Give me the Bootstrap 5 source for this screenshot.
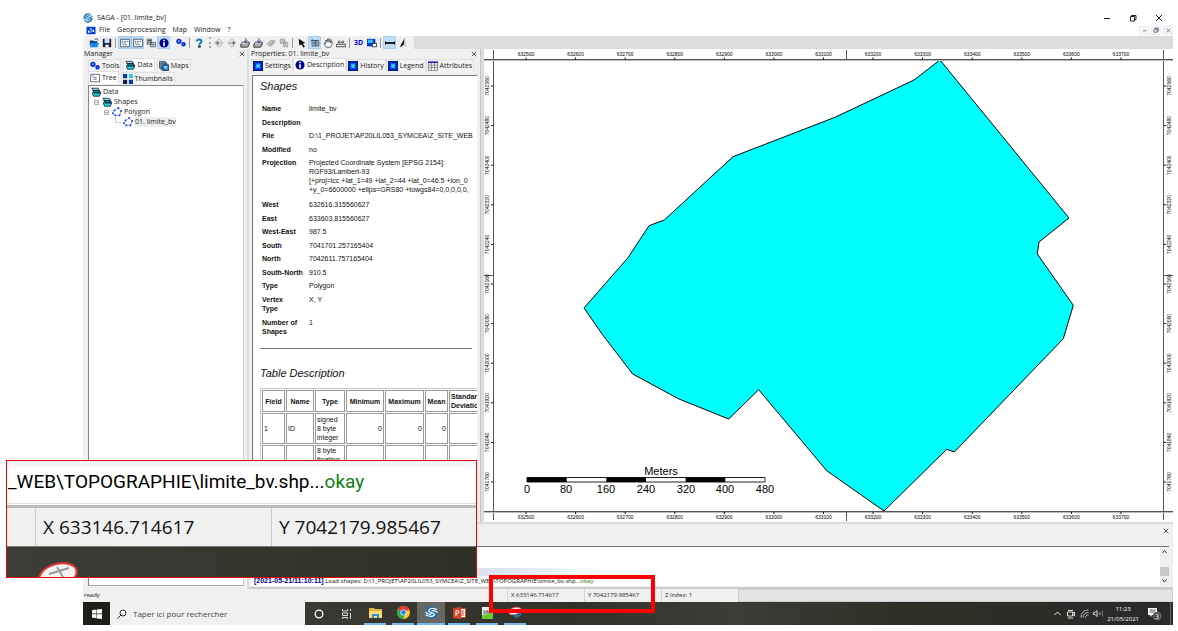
<!DOCTYPE html>
<html lang="fr">
<head>
<meta charset="utf-8">
<meta name="viewport" content="width=device-width, initial-scale=1">
<title>SAGA - [01. limite_bv]</title>
<link href="https://cdn.jsdelivr.net/npm/bootstrap@5.3.0/dist/css/bootstrap.min.css" rel="stylesheet">
<style>
:root{--ui:"Open Sans","Noto Sans",sans-serif;--face:#f0f0f0;--edge:#dcdcdc;--hot:#bfdcf5}
body{font:7px/10px var(--ui);color:#222;background:#fff}
button,input,a{font:inherit;color:inherit}
button{border:0;background:none;padding:0}
svg{display:block;flex:none}
.desk{padding:12px 5px 5px 83px}
.ico{width:10px;height:10px}
.titlebar{height:12px}
.titlebar .caption{gap:18px;padding-right:10px}
.menubar{height:12px;padding-left:3px;gap:7px}
.menubar a{text-decoration:none;color:#222}
.menubar .first{margin-left:-4px}
.mdi{gap:2px}
.mdi button{width:10px;height:9px;background:#f7f7f7;border:1px solid #eee;color:#345;display:grid;place-items:center}
.toolstrip{background:var(--edge);height:13px}
.tools{background:var(--face);padding:0 5px 0 4px}
.tools button{width:13px;height:13px;display:grid;place-items:center}
.tools button.on{background:var(--hot);box-shadow:inset 0 0 0 1px #a9d0f2}
.tools .bar{width:1px;height:10px;background:#999;margin:0 2px}
.tools .grip{width:3px;height:11px;border-left:2px dotted #aaa}
.tools .three{color:#0000e0}
.work{display:grid;grid-template-columns:166px 232px minmax(0,1fr);grid-template-rows:auto 67px;background:var(--edge)}
.pane{background:var(--face)}
.pane-manager{grid-row:1/3;border-right:2px solid var(--edge);padding:0 2px 3px 1px}
.pane-props{min-width:0;padding:0 3px 0 2px;border-right:1px solid #c4c4c4}
.pane-head{height:9px;line-height:9px}
.tabs{gap:2px;align-items:flex-end;height:13px}
.tabs button{display:flex;align-items:center;gap:2px;height:12px;padding:0 1px;border:1px solid #e0e0e0;border-bottom:0;background:#f3f3f3;white-space:nowrap}
.tabs button.active{background:#fff;height:13px}
.tabs.tight{gap:0}
.tree{background:#fff;border:1px solid #888;border-color:#888 #ccc #aaa #888;margin:1px 1px 0 4px;flex:1;padding-top:1px}
.tree ul{list-style:none;margin:0;padding:0}
.tree li>span{display:flex;align-items:center;gap:2px;height:10px}
.page{background:#fff;border:solid #777;border-width:1px 0 0 1px;margin:4px 0 0 1px;padding:4px 0 0 7px;overflow:hidden;font-family:"Liberation Sans",Arial,sans-serif;line-height:9px;flex:1;color:#111}
.page h2{font-size:11px;line-height:13px;font-style:italic;font-weight:400;margin:0}
.page .second{margin-top:18px}
.facts{margin:9px 0 0;height:237px;width:400px}
.facts th,.facts td{padding:2px;vertical-align:top}
.facts th{width:47px}
.page hr{margin:9px 5px 0 0;border-color:#777;opacity:1}
.fields{border:1px solid #ccc;border-collapse:separate;border-spacing:1px;width:250px;table-layout:fixed;margin-top:8px}
.fields th,.fields td{border:1px solid #999;padding:0 1px;height:22px;vertical-align:middle}
.fields th{text-align:center}
.fields td{height:31px}
.fields .open td{vertical-align:top}
.num{text-align:right}
.pane-map{background:#fff;min-width:0}
.pane-map svg{width:100%;height:auto}
.tick{font:5px "Liberation Sans",Arial,sans-serif;fill:#000;text-anchor:middle}
.scale{font:11px "Liberation Sans",Arial,sans-serif;fill:#000;text-anchor:middle}
.pane-log{grid-column:2/4;border-top:2px solid var(--edge);border-bottom:2px solid #ccc;min-width:0}
.log{border-top:1px solid #777;background:#fff;height:40px;margin:0 4px 0 2px;overflow:hidden;font-size:6px}
.log .lines{padding-left:3px;white-space:nowrap;color:#111}
.log .previous{height:8px;width:350px;background:linear-gradient(90deg,#dbe3ef 70%,#fff)}
.log b{color:#000080;font:bold 7px "Liberation Sans",Arial,sans-serif}
.ok{color:#118011}
.scroller{width:9px;background:var(--face)}
.scroller .thumb{height:9px;background:#c8c8c8}
.statusbar{height:13px;background:var(--face);font-size:6px;line-height:13px}
.statusbar .message{width:424px;padding-left:1px}
.statusbar .cell{width:77px;border-left:1px solid #d4d4d4;padding-left:3px}
.statusbar .rest{background:#e5e5e5;border:1px solid #ccc}
.taskbar{height:23px;background:linear-gradient(90deg,#3e3e3b,#333229 45%,#3c3c39 60%,#302f25 75%,#282a2b);color:#fff}
.start{width:27px;background:#1f1f18;display:grid;place-items:center}
.search{width:195px;background:#f1f1f1;color:#333;padding-left:7px;gap:6px}
.search input{border:0;background:none;padding:0;width:150px;outline:0;color:#444;font-size:8px}
.search input::placeholder{color:#444;opacity:1}
.apps button{width:28px;height:23px;display:grid;place-items:center}
.apps button.run{border-bottom:2px solid #76b9ed;width:22px;margin:0 3px}
.apps button.now{background:#666865;width:28px;margin:0}
.tray{gap:4px;padding-right:2px;font-size:6px;line-height:10px}
.tray .peek{width:1px;background:#666}
.callout{left:6px;top:460px;width:471px;height:118px;border:1px solid #e00;background:#fff;overflow:hidden;color:#000}
.callout .c-line{height:43px;padding:5px 0 0 1px;font:19px/32px Roboto,"Liberation Sans",sans-serif;background:linear-gradient(#e8eef8,#fff 8px);white-space:nowrap;border-bottom:1px solid #ddd}
.callout .c-status{margin-top:1px;height:41px;border-top:3px solid #bbb;background:var(--face);font-size:19px;line-height:38px;color:#111}
.callout .c-x{margin-left:28px;width:236px;border-left:1px solid #ccc;padding-left:7px}
.callout .c-y{border-left:1px solid #ccc;padding-left:7px}
.callout .c-task{height:33px;background:linear-gradient(90deg,#3d3d38,#302f26);border-top:1px solid #777}
.focusbox{left:489px;top:575px;width:166px;height:38px;border:4px solid #f00}
</style>
</head>
<body>
<svg width="0" height="0" class="position-absolute" aria-hidden="true">
  <symbol id="saga" viewBox="0 0 12 12"><circle cx="6" cy="6" r="5.600" fill="#1b6fae"/><path d="M11 3.500C8 1.500 3.500 2 3.500 4.300S9 5.800 8.700 8 4 9.800.5 8M11.500 6C9 3.800 6 3.800 6.500 5M.5 5.500c2 2.500 5 2.500 5.500 1.500" fill="none" stroke="#fff" stroke-width="1.100"/></symbol>
  <symbol id="doc" viewBox="0 0 12 12"><path fill="#0638d8" d="M0 1h12v10H0z"/><path fill="#fff" d="M2 6h2v3H2zM5 3h2v2H5zM8 5h2v3H8z"/><path fill="#3cf" d="M5 6h2v3H5z"/></symbol>
  <symbol id="open" viewBox="0 0 12 12"><path fill="#0a3f9a" d="M1 3h4l1 1h4v2H3L1 10z"/><path fill="#1687ee" d="M3 6h9l-2 5H1z"/><path d="M7 2c2-2 3-1 4 1" fill="none" stroke="#124"/></symbol>
  <symbol id="save" viewBox="0 0 12 12"><path fill="#111b33" d="M1 1h10v10H1z"/><path fill="#cfe0ff" d="M3 1h6v5H3z"/><path fill="#fff" d="M4 8h4v3H4z"/></symbol>
  <symbol id="win" viewBox="0 0 12 12"><path fill="#fff" stroke="#334a5a" d="M.5 1.500h11v9H.5z"/><path stroke="#334a5a" stroke-dasharray="2 1" d="M2 4h8M2 6h5M3 8h6"/></symbol>
  <symbol id="tree" viewBox="0 0 12 12"><path fill="#fff" stroke="#556" d="M.5 1.500h11v9H.5z"/><path stroke="#46a" d="M2 3.500h3M4 5.500h4M4 7.500h4"/></symbol>
  <symbol id="src" viewBox="0 0 12 12"><path fill="#dde" stroke="#456" d="M1.500 1.500h5v6h-5zM5.500 5.500h6v5h-6z"/><path stroke="#234" d="M2 3h4M2 5h4M7 8h3"/></symbol>
  <symbol id="info" viewBox="0 0 12 12"><circle cx="6" cy="6" r="5.500" fill="#00008b"/><path fill="#fff" d="M5 2h2v2H5zM5 5h2v5H5z"/></symbol>
  <symbol id="gears" viewBox="0 0 12 12"><circle cx="3.500" cy="4" r="2.200" fill="#6cf" stroke="#0a2ad0" stroke-width="2"/><circle cx="9" cy="7.500" r="1.700" fill="#6cf" stroke="#0a2ad0" stroke-width="2"/></symbol>
  <symbol id="help" viewBox="0 0 12 12"><path d="M3.500 4C3 1 9 1 9 4c0 2-2.500 2-2.500 4" fill="none" stroke="#057fae" stroke-width="2.400"/><path fill="#024" d="M5 9h3v2.500H5z"/></symbol>
  <symbol id="prev" viewBox="0 0 12 12"><path d="M6 1l5 5-5 5-5-5z" fill="#eee" stroke="#aaa"/><path stroke="#777" d="M3 6h6M5 4L3 6l2 2"/></symbol>
  <symbol id="next" viewBox="0 0 12 12"><path d="M6 1l5 5-5 5-5-5z" fill="#eee" stroke="#aaa"/><path stroke="#777" d="M3 6h6M7 4l2 2-2 2"/></symbol>
  <symbol id="load" viewBox="0 0 12 12"><path d="M3 5h8L9 8H1z" fill="#eee" stroke="#222"/><path d="M1 8v3h8l2-3V5" fill="#aaa" stroke="#222"/><path d="M7 0v5M5 3l2 2 2-2" fill="none" stroke="#148"/></symbol>
  <symbol id="erase" viewBox="0 0 12 12"><path d="M1 7l5-4 5 1-5 6z" fill="#ccc" stroke="#999"/><path d="M4 6l2 2 4-6" fill="none" stroke="#888"/></symbol>
  <symbol id="copy" viewBox="0 0 12 12"><path d="M1.500 1.500h5v5h-5zM5.500 5.500h5v5h-5z" fill="#ccc" stroke="#999"/><path d="M3 4h5v5" fill="none" stroke="#999"/></symbol>
  <symbol id="arrow" viewBox="0 0 12 12"><path d="M2 1l8 5-3 .5 2.500 4-2 1-2-4L3 9z" fill="#000"/></symbol>
  <symbol id="zoomin" viewBox="0 0 12 12"><path d="M2.500 1v8.500h8V3H1M6.500 3v6M4 6h5" stroke="#345" fill="none"/><circle cx="6.500" cy="6" r="2.500" fill="none" stroke="#345" stroke-width=".6"/></symbol>
  <symbol id="hand" viewBox="0 0 12 12"><path d="M4 11L1 6.500 2 6l1.500 1L3 3h1.500L5 5l.5-4H7v4l1-3h1.500L9 6l1-2h1v3L9 11z" fill="#fff" stroke="#222" stroke-width=".8"/></symbol>
  <symbol id="measure" viewBox="0 0 12 12"><path d="M.5 7.500h11v3H.5zM3 5h6M4 3L2.500 5 4 6.500M8 3l1.500 2L8 6.500" fill="none" stroke="#333"/></symbol>
  <symbol id="grab" viewBox="0 0 12 12"><path fill="#063dc8" d="M0 1h10v9H0z"/><path fill="#3be" d="M1 2h6v4H1z"/><path fill="#fff" stroke="#123" d="M6.500 6.500h5v4h-5z"/></symbol>
  <symbol id="line" viewBox="0 0 12 12"><path d="M0 6h12" stroke="#000" stroke-width="2"/><path d="M.5 4v4M11.500 4v4" stroke="#000"/></symbol>
  <symbol id="north" viewBox="0 0 12 12"><path d="M8 0L2 11l5-3z" fill="#000"/><path d="M8 0l2 10-3-2z" fill="#ddd" stroke="#aaa" stroke-width=".5"/></symbol>
  <symbol id="layers" viewBox="0 0 12 12"><path d="M3.500 7h8l-1.500 4H3L1.500 7z" fill="#2cd5dc" stroke="#001a33"/><path d="M2 4h8l1.500 3H4z" fill="#0a7a8a" stroke="#001a33"/><path d="M1 1.500h7.500L10 4H3z" fill="#bff" stroke="#001a33"/></symbol>
  <symbol id="maps" viewBox="0 0 12 12"><path fill="#8ab" stroke="#246" d="M.5.500h7v8h-7zM2.500 2.500h7v8h-7z"/><path fill="#37c" stroke="#135" d="M4.500 4.500h7v7h-7z"/><path fill="#6dc" d="M6 6h4v3H6z"/></symbol>
  <symbol id="thumbs" viewBox="0 0 12 12"><path fill="#03389c" d="M0 0h5v5H0zM7 7h5v5H7z"/><path fill="#38c8d8" d="M7 0h5v5H7z"/><path fill="#123" d="M0 7h5v5H0z"/></symbol>
  <symbol id="poly" viewBox="0 0 12 12"><path d="M3 4.500L7.500 1 11 5 9 10H3.500L1 7.500z" fill="none" stroke="#7a94e8"/><path fill="#1a3cf0" d="M2 3h2v2H2zM6.500 0h2v2h-2zM10 4h2v2h-2zM8 9h2v2H8zM3 9h2v2H3zM0 6.500h2v2H0z"/></symbol>
  <symbol id="square" viewBox="0 0 12 12"><path fill="#001a80" d="M0 0h12v12H0z"/><path fill="#0a4cff" d="M2 2h8v8H2z"/><path fill="#3de1ff" d="M4 4h4v4H4z"/></symbol>
  <symbol id="gridic" viewBox="0 0 12 12"><path d="M.5 1.500h11v10H.5zM4 1v10M8 1v10M0 5h12M0 8h12" fill="#fff" stroke="#777"/><path d="M0 1.500h12" stroke="#22c" stroke-width="2"/></symbol>
  <symbol id="min" viewBox="0 0 8 8"><path d="M1 4.500h6" stroke="currentColor"/></symbol>
  <symbol id="restore" viewBox="0 0 8 8"><path d="M1.500 2.500h4V7h-4zM2.500 2V1.500H7v4H6" fill="none" stroke="currentColor"/></symbol>
  <symbol id="close" viewBox="0 0 8 8"><path d="M1 1l6 6M7 1L1 7" stroke="currentColor"/></symbol>
</svg>

<div class="desk position-relative">
  <header class="titlebar d-flex align-items-center">
    <svg width="10" height="10" class="me-1"><use href="#saga"/></svg><span>SAGA - [01. limite_bv]</span>
    <div class="caption d-flex ms-auto">
      <button aria-label="Réduire"><svg width="8" height="8"><use href="#min"/></svg></button>
      <button aria-label="Restaurer"><svg width="8" height="8"><use href="#restore"/></svg></button>
      <button aria-label="Fermer"><svg width="8" height="8"><use href="#close"/></svg></button>
    </div>
  </header>
  <nav class="menubar d-flex align-items-center">
    <svg width="10" height="9"><use href="#doc"/></svg>
    <a href="#" class="first">File</a><a href="#">Geoprocessing</a><a href="#">Map</a><a href="#">Window</a><a href="#">?</a>
    <div class="mdi d-flex ms-auto">
      <button aria-label="Réduire la carte"><svg width="5" height="5"><use href="#min"/></svg></button>
      <button aria-label="Restaurer la carte"><svg width="6" height="6"><use href="#restore"/></svg></button>
      <button aria-label="Fermer la carte"><svg width="5" height="5"><use href="#close"/></svg></button>
    </div>
  </nav>
  <div class="toolstrip d-flex">
    <div class="tools d-flex align-items-center" role="toolbar" aria-label="Outils">
      <button aria-label="Open"><svg class="ico"><use href="#open"/></svg></button>
      <button aria-label="Save"><svg class="ico"><use href="#save"/></svg></button>
      <span class="bar"></span>
      <button class="on" aria-label="Manager"><svg class="ico"><use href="#win"/></svg></button>
      <button class="on" aria-label="Properties"><svg class="ico"><use href="#win"/></svg></button>
      <button aria-label="Data source"><svg class="ico"><use href="#src"/></svg></button>
      <button class="on" aria-label="Messages"><svg class="ico"><use href="#info"/></svg></button>
      <button class="ms-1" aria-label="Run tool"><svg class="ico"><use href="#gears"/></svg></button>
      <span class="bar"></span>
      <button aria-label="Help"><svg class="ico"><use href="#help"/></svg></button>
      <span class="grip ms-1"></span>
      <button aria-label="Previous extent"><svg class="ico"><use href="#prev"/></svg></button>
      <button aria-label="Next extent"><svg class="ico"><use href="#next"/></svg></button>
      <button aria-label="Full extent"><svg class="ico"><use href="#load"/></svg></button>
      <button aria-label="Layer extent"><svg class="ico"><use href="#load"/></svg></button>
      <button aria-label="Selection extent"><svg class="ico"><use href="#erase"/></svg></button>
      <button aria-label="Synchronize"><svg class="ico"><use href="#copy"/></svg></button>
      <span class="bar"></span>
      <button aria-label="Action"><svg class="ico"><use href="#arrow"/></svg></button>
      <button class="on" aria-label="Zoom"><svg class="ico"><use href="#zoomin"/></svg></button>
      <button aria-label="Pan"><svg class="ico"><use href="#hand"/></svg></button>
      <button aria-label="Measure"><svg class="ico"><use href="#measure"/></svg></button>
      <span class="bar"></span>
      <button class="three fw-bold">3D</button>
      <button aria-label="Save as image"><svg class="ico"><use href="#grab"/></svg></button>
      <span class="bar"></span>
      <button class="on" aria-label="Scale bar"><svg class="ico"><use href="#line"/></svg></button>
      <button aria-label="North arrow"><svg class="ico"><use href="#north"/></svg></button>
    </div>
  </div>

  <main class="work">
    <section class="pane pane-manager d-flex flex-column">
      <div class="pane-head d-flex justify-content-between align-items-center"><span>Manager</span><button aria-label="Fermer Manager"><svg width="6" height="6"><use href="#close"/></svg></button></div>
      <div class="tabs d-flex ps-1">
        <button><svg class="ico"><use href="#gears"/></svg>Tools</button>
        <button class="active"><svg class="ico"><use href="#layers"/></svg>Data</button>
        <button><svg class="ico"><use href="#maps"/></svg>Maps</button>
      </div>
      <div class="tabs d-flex ps-1">
        <button class="active"><svg class="ico"><use href="#tree"/></svg>Tree</button>
        <button><svg class="ico"><use href="#thumbs"/></svg>Thumbnails</button>
      </div>
      <div class="tree">
        <ul>
          <li><span style="padding-left:2px"><svg class="ico"><use href="#layers"/></svg>Data</span></li>
          <li><span style="padding-left:4px"><svg width="7" height="7" viewBox="0 0 7 7"><path d="M1.500 1.500h4v4h-4zM2 3.500h3" fill="#fff" stroke="#aaa"/></svg><svg class="ico"><use href="#layers"/></svg>Shapes</span></li>
          <li><span style="padding-left:14px"><svg width="7" height="7" viewBox="0 0 7 7"><path d="M1.500 1.500h4v4h-4zM2 3.500h3" fill="#fff" stroke="#aaa"/></svg><svg class="ico"><use href="#poly"/></svg>Polygon</span></li>
          <li><span style="padding-left:25px"><svg width="7" height="10" viewBox="0 0 7 10"><path d="M1.500 0v5.500H7" fill="none" stroke="#ccc"/></svg><svg class="ico"><use href="#poly"/></svg><span style="background:#eee">01. limite_bv</span></span></li>
        </ul>
      </div>
    </section>

    <section class="pane pane-props d-flex flex-column">
      <div class="pane-head d-flex justify-content-between align-items-center"><span>Properties: 01. limite_bv</span><button aria-label="Fermer Properties"><svg width="6" height="6"><use href="#close"/></svg></button></div>
      <div class="tabs tight d-flex">
        <button><svg class="ico"><use href="#square"/></svg>Settings</button>
        <button class="active"><svg class="ico"><use href="#info"/></svg>Description</button>
        <button><svg class="ico"><use href="#square"/></svg>History</button>
        <button><svg class="ico"><use href="#square"/></svg>Legend</button>
        <button><svg class="ico"><use href="#gridic"/></svg>Attributes</button>
      </div>
      <div class="page">
        <h2>Shapes</h2>
        <table class="facts">
          <tr><th>Name</th><td>limite_bv</td></tr>
          <tr><th>Description</th><td></td></tr>
          <tr><th>File</th><td>D:\1_PROJET\AP20LIL053_SYMCEA\Z_SITE_WEB</td></tr>
          <tr><th>Modified</th><td>no</td></tr>
          <tr><th>Projection</th><td>Projected Coordinate System [EPSG 2154]:<br>RGF93/Lambert-93<br>[+proj=lcc +lat_1=49 +lat_2=44 +lat_0=46.5 +lon_0<br>+y_0=6600000 +ellps=GRS80 +towgs84=0,0,0,0,0,</td></tr>
          <tr><th>West</th><td>632616.315560627</td></tr>
          <tr><th>East</th><td>633603.815560627</td></tr>
          <tr><th>West-East</th><td>987.5</td></tr>
          <tr><th>South</th><td>7041701.257165404</td></tr>
          <tr><th>North</th><td>7042611.757165404</td></tr>
          <tr><th>South-North</th><td>910.5</td></tr>
          <tr><th>Type</th><td>Polygon</td></tr>
          <tr><th>Vertex<br>Type</th><td>X, Y</td></tr>
          <tr><th>Number of<br>Shapes</th><td>1</td></tr>
        </table>
        <hr>
        <h2 class="second">Table Description</h2>
        <table class="fields">
          <colgroup><col style="width:23px"><col style="width:28px"><col style="width:30px"><col style="width:38px"><col style="width:39px"><col style="width:23px"><col></colgroup>
          <tr><th>Field</th><th>Name</th><th>Type</th><th>Minimum</th><th>Maximum</th><th>Mean</th><th class="text-start">Standard Deviation</th></tr>
          <tr><td>1</td><td>ID</td><td>signed<br>8 byte<br>integer</td><td class="num">0</td><td class="num">0</td><td class="num">0</td><td></td></tr>
          <tr class="open"><td></td><td></td><td>8 byte<br>floating</td><td></td><td></td><td></td><td></td></tr>
        </table>
      </div>
    </section>

    <section class="pane-map">
      <svg viewBox="481 49 692 473" role="img" aria-label="01. limite_bv">
        <path d="M481 49h3v473h-3z" fill="#dcdcdc"/>
        <path d="M940 60L1069 218 1039 242 1037.300 254 1073.300 305.300 1063.300 338.700 954.300 452 946.700 449.300 884 511 826.700 470.700 758.700 389.700 728.700 419 678.300 398.700 632.700 374 602.300 334.300 584 308 628.300 257.300 649 225.700 664.300 220 733 156.700 835 117.300 914 80z" fill="#0ff" stroke="#000"/>
        <path d="M484 59.500h689M484 511.500h689M493.500 50v470M1163.500 50v470" stroke="#555" fill="none"/>
        <path d="M484 60.500h689M484 512.500h689" stroke="#bbb"/>
        <path d="M846.500 50v10M846.500 512v9M484 275.500h10M1164 275.500h9" stroke="#555"/>
        <g id="ticks"></g>
        <path d="M527 477.500h238v4.500H527z" fill="#fff" stroke="#222"/>
        <path d="M527 477.500h39.700v4.500H527zM606.300 477.500H646v4.500h-39.700zM685.600 477.500h39.700v4.500h-39.700z" fill="#000"/>
        <g class="scale"><text x="661" y="475">Meters</text><text x="527" y="493">0</text><text x="566" y="493">80</text><text x="606" y="493">160</text><text x="646" y="493">240</text><text x="686" y="493">320</text><text x="725" y="493">400</text><text x="765" y="493">480</text></g>
      </svg>
    </section>

    <section class="pane pane-log">
      <div class="text-end pe-1" style="height:22px"><button class="pt-1" aria-label="Fermer Messages"><svg width="6" height="6"><use href="#close"/></svg></button></div>
      <div class="log d-flex">
        <div class="lines flex-fill d-flex flex-column justify-content-end" role="log">
          <div class="previous"></div>
          <div><b>[2021-05-21/11:10:11]</b> Load shapes: D:\1_PROJET\AP20LIL053_SYMCEA\Z_SITE_WEB\TOPOGRAPHIE\limite_bv.shp...<span class="ok">okay</span></div>
        </div>
        <div class="scroller d-flex flex-column align-items-center">
          <svg width="7" height="9" viewBox="0 0 7 9"><path d="M1.500 6l2-2.500 2 2.500" fill="none" stroke="#333"/></svg>
          <div class="thumb w-100 mt-auto"></div>
          <svg width="7" height="10" viewBox="0 0 7 9"><path d="M1.500 3l2 2.500 2-2.500" fill="none" stroke="#333"/></svg>
        </div>
      </div>
    </section>
  </main>

  <div class="statusbar d-flex">
    <span class="message">ready</span>
    <span class="cell">X 633146.714617</span><span class="cell">Y 7042179.985467</span><span class="cell">Z Index: 1</span><span class="rest flex-fill"></span>
  </div>

  <footer class="taskbar d-flex">
    <button class="start" aria-label="Démarrer"><svg width="10" height="10" viewBox="0 0 10 10"><path fill="#fff" d="M0 1.300l4.500-.7v4H0zM5 .500L10 0v4.600H5zM0 5.200h4.500v4L0 8.500zM5 5.200h5V10l-5-.6z"/></svg></button>
    <label class="search d-flex align-items-center"><svg width="10" height="10" viewBox="0 0 10 10"><circle cx="6" cy="4" r="3" fill="none" stroke="#333"/><path d="M4 6L.5 9.500" stroke="#333"/></svg><input type="search" placeholder="Taper ici pour rechercher" aria-label="Rechercher"></label>
    <div class="apps d-flex">
      <button aria-label="Cortana"><svg width="10" height="10" viewBox="0 0 10 10"><circle cx="5" cy="5" r="3.800" fill="none" stroke="#fff" stroke-width="1.300"/></svg></button>
      <button aria-label="Vue des tâches"><svg width="10" height="10" viewBox="0 0 10 10"><path d="M.5 0v2h5V0M.5 4h5v2.500h-5zM.5 10V8.500h5V10M8.500 0v2M8.500 4v6" fill="none" stroke="#ddd"/></svg></button>
      <button class="run" aria-label="Explorateur"><svg width="13" height="12" viewBox="0 0 13 12"><path fill="#e9b43b" d="M0 1h5l1 1h7v3H0z"/><path fill="#ffdc73" d="M0 4h13v7H0z"/><path fill="#2f8fe0" d="M3 7h7v4H8V9H5v2H3z"/></svg></button>
      <button class="run" aria-label="Chrome"><svg width="13" height="13" viewBox="0 0 12 12"><circle cx="6" cy="6" r="6" fill="#fbc926"/><path fill="#e33b2e" d="M6 6L.8 3a6 6 0 0 1 10.400 0z"/><path fill="#2da94f" d="M6 6L.8 3A6 6 0 0 0 5.500 12L8 7z"/><circle cx="6" cy="6" r="2.800" fill="#fff"/><circle cx="6" cy="6" r="2.200" fill="#3a80ea"/></svg></button>
      <button class="run now" aria-label="SAGA"><svg width="13" height="13"><use href="#saga"/></svg></button>
      <button class="run" aria-label="PowerPoint"><svg width="13" height="12" viewBox="0 0 13 12"><path fill="#fff" stroke="#d14424" d="M6.500 1.500h6v9h-6z"/><path stroke="#d14424" d="M8 4h3M8 6h3M8 8h3"/><path fill="#d14424" d="M0 1l8-1v12l-8-1z"/><path d="M3 9V3.500h1.500a1.500 1.500 0 0 1 0 3H3" fill="none" stroke="#fff"/></svg></button>
      <button class="run" aria-label="Notepad++"><svg width="11" height="12" viewBox="0 0 11 12"><path fill="#eee" d="M0 0h9l2 2v10H0z"/><path fill="#6c3" d="M0 8l5-1 6-1v6H0z"/><path d="M2 3v4M4 7V4h2v3M8 4v3" stroke="#364" fill="none"/></svg></button>
      <button class="run" aria-label="Outil Capture"><svg width="14" height="13" viewBox="0 0 14 13"><ellipse cx="7" cy="5" rx="6.500" ry="3.500" fill="#eee" stroke="#d66" transform="rotate(-15 7 5)"/><path d="M4 6l7-3" stroke="#777"/><circle cx="8" cy="10" r="1.500" fill="none" stroke="#29d"/><circle cx="11" cy="8.500" r="1.500" fill="none" stroke="#29d"/></svg></button>
    </div>
    <div class="tray d-flex ms-auto align-items-center">
      <svg width="9" height="9" viewBox="0 0 9 9"><path d="M1.500 6l3-3 3 3" fill="none" stroke="#eee"/></svg>
      <svg width="10" height="10" viewBox="0 0 10 10"><path d="M2 1.500h5M2 9h5M1.500 3h5v4h-5zM6.500 4.500L8.500 3v4L6.500 5.500" fill="none" stroke="#ddd"/></svg>
      <svg width="9" height="9" viewBox="0 0 9 9"><path d="M1 8.500C1 4 4 1 8.500 1M3 8.500C3 5.500 5 3.500 8.500 3.500M5.500 8.500c0-2 1-2.500 3-2.500" fill="none" stroke="#bbb"/></svg>
      <svg width="10" height="9" viewBox="0 0 10 9"><path d="M.5 3.500h1.500l2-2v6l-2-2H.5z" fill="none" stroke="#ddd"/><path d="M5.500 3l2.500 3M8 3L5.500 6M9.500 1.500q.5 3 0 6" fill="none" stroke="#999" stroke-width=".8"/></svg>
      <div class="text-center">11:23<br>21/05/2021</div>
      <svg class="ms-1" width="15" height="14" viewBox="0 0 15 14"><path fill="#fff" d="M1 1h9v7H5L3.500 10 3 8H1z"/><path stroke="#555" d="M2.500 3h6M2.500 5h6"/><circle cx="10" cy="9" r="4" fill="#444" stroke="#999" stroke-width=".6"/><text x="10" y="11.500" font-size="7" fill="#fff" text-anchor="middle">3</text></svg>
      <span class="peek align-self-stretch ms-1"></span>
    </div>
  </footer>

  <aside class="callout position-absolute">
    <div class="c-line">_WEB\TOPOGRAPHIE\limite_bv.shp...<span class="ok">okay</span></div>
    <div class="c-status d-flex"><span class="c-x">X 633146.714617</span><span class="c-y">Y 7042179.985467</span></div>
    <div class="c-task"><svg width="110" height="33" viewBox="0 0 110 33"><ellipse cx="51" cy="28" rx="19" ry="11" fill="#f3f3f3" stroke="#e33" stroke-width="2" transform="rotate(-15 51 28)"/><path d="M42 27l20-6M50 20l7 12" stroke="#999" stroke-width="2"/></svg></div>
  </aside>
  <div class="focusbox position-absolute"></div>
</div>

<script src="https://cdn.jsdelivr.net/npm/bootstrap@5.3.0/dist/js/bootstrap.bundle.min.js"></script>
<script>
  // Coordinate labels and tick marks of the map frame
  let out = '';
  for (let i = 0; i < 13; i++) {
    const x = 526 + i * 49.58, e = 632500 + i * 100;
    out += `<path d="M${x} 57.500v2M${x} 512v2" stroke="#111"/><text class="tick" x="${x}" y="56">${e}</text><text class="tick" x="${x}" y="519">${e}</text>`;
  }
  for (let i = 0; i < 11; i++) {
    const y = 86 + i * 39.6, n = 7042560 - i * 80;
    out += `<path d="M491 ${y}h2M1164 ${y}h2" stroke="#111"/>` +
      [489, 1171].map(x => `<text class="tick" transform="translate(${x} ${y}) rotate(-90)">${n}</text>`).join('');
  }
  document.getElementById('ticks').innerHTML = out;
</script>
</body>
</html>
